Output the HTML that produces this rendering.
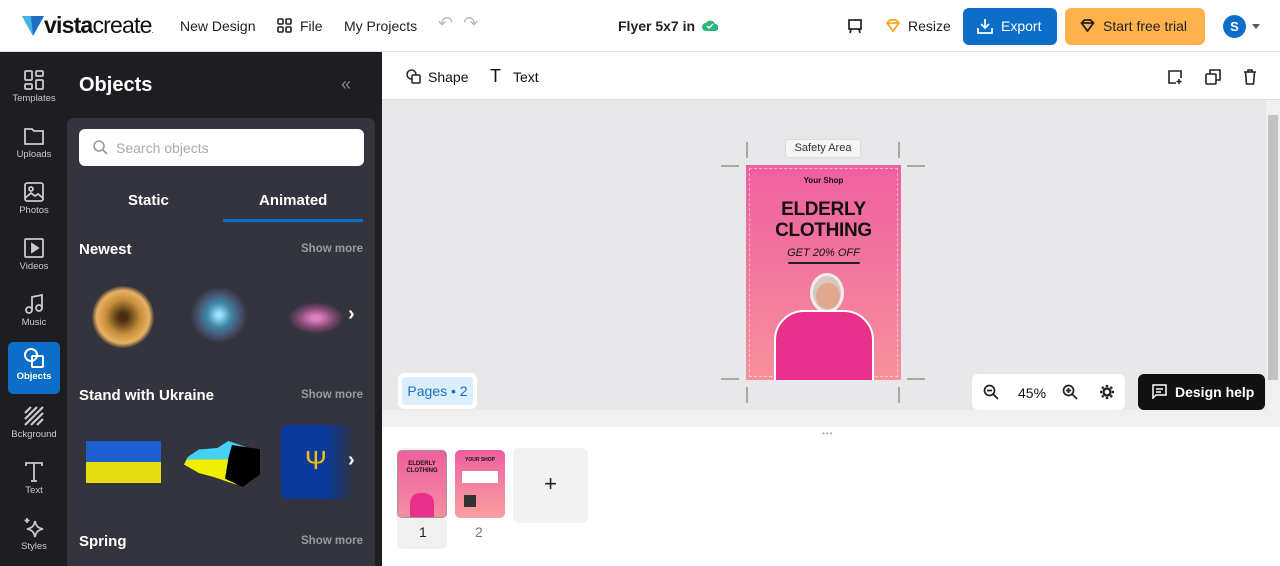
<!DOCTYPE html>
<html><head><meta charset="utf-8"><style>
*{margin:0;padding:0;box-sizing:border-box}
html,body{width:1280px;height:566px;overflow:hidden}
body{font-family:"Liberation Sans",sans-serif;background:#fff;position:relative;color:#111}
.a{position:absolute}
.hdr{left:0;top:0;width:1280px;height:52px;background:#fff;border-bottom:1px solid #e4e4e4}
.hdr span{position:absolute;font-size:14px;color:#222;top:18px}
.rail{left:0;top:52px;width:67px;height:514px;background:#1d1d22}
.ri{position:absolute;left:8px;width:52px;height:52px;text-align:center;color:#c9c9cf;font-size:9.5px}
.ri svg{display:block;margin:5px auto 2px}
.side{left:67px;top:52px;width:315px;height:514px;background:#1d1d22}
.pan{left:67px;top:118px;width:308px;height:448px;background:#33343d;border-radius:7px 7px 0 0}
.w{color:#fff;font-weight:bold;font-size:15px}
.sm{color:#9a9aa3;font-size:11.5px;font-weight:bold;width:100px;text-align:right;left:263px}
.cv{left:382px;top:100px;width:884px;height:310px;background:#e8e8ea}
</style></head><body>
<div class="a hdr">
 <svg class="a" style="left:22px;top:15px" width="22" height="22" viewBox="0 0 22 22"><path d="M0 1h22L11 21z" fill="#1b6fc2"/><path d="M0 1h9l2 20z" fill="#45b3e8"/></svg>
 <div class="a" style="left:44px;top:12px;font-size:23px;letter-spacing:-0.8px;color:#111"><b>vista</b>create<span style="font-size:8px;position:static">.</span></div>
 <span style="left:180px">New Design</span>
 <svg class="a" style="left:277px;top:18px" width="15" height="15" viewBox="0 0 15 15" fill="none" stroke="#222" stroke-width="1.6"><rect x="1" y="1" width="5" height="5" rx="1"/><rect x="9" y="1" width="5" height="5" rx="1"/><rect x="1" y="9" width="5" height="5" rx="1"/><rect x="9" y="9" width="5" height="5" rx="1"/></svg>
 <span style="left:300px">File</span>
 <span style="left:344px">My Projects</span>
 <span style="left:438px;color:#bbb;font-size:18px;top:13px">↶ &nbsp;↷</span>
 <span style="left:618px;font-weight:bold;font-size:14px">Flyer 5x7 in</span>
 <svg class="a" style="left:702px;top:19px" width="16" height="12" viewBox="0 0 16 12"><path d="M4 12a4 4 0 0 1 0-8 5 5 0 0 1 9 1 3.5 3.5 0 0 1 0 7z" fill="#2cb67d"/><path d="M5 7l2 2 4-4" stroke="#fff" stroke-width="1.5" fill="none"/></svg>
 <svg class="a" style="left:847px;top:18px" width="16" height="16" viewBox="0 0 16 16" fill="none" stroke="#222" stroke-width="1.7"><rect x="2" y="2" width="12" height="9"/><path d="M4 11l-1 4M12 11l1 4"/></svg>
 <svg class="a" style="left:886px;top:19px" width="14" height="13" viewBox="0 0 14 13" fill="none" stroke="#f5a623" stroke-width="1.8"><path d="M1 4l3-3h6l3 3-6 8z M1 4h12"/></svg>
 <span style="left:908px">Resize</span>
 <div class="a" style="left:963px;top:8px;width:94px;height:37px;background:#0d6ec9;border-radius:6px;color:#fff;font-size:14px;line-height:37px;padding-left:38px">Export</div>
 <svg class="a" style="left:977px;top:18px" width="16" height="16" viewBox="0 0 16 16" fill="none" stroke="#fff" stroke-width="1.7"><path d="M8 1v9M4 6l4 4 4-4M1 10v5h14v-5"/></svg>
 <div class="a" style="left:1065px;top:8px;width:140px;height:37px;background:#ffb24c;border-radius:6px;color:#222;font-size:14px;line-height:37px;padding-left:38px">Start free trial</div>
 <svg class="a" style="left:1080px;top:19px" width="15" height="13" viewBox="0 0 14 13" fill="none" stroke="#222" stroke-width="1.8"><path d="M1 4l3-3h6l3 3-6 8z M1 4h12"/></svg>
 <div class="a" style="left:1223px;top:15px;width:23px;height:23px;border-radius:50%;background:#0d6ec9;color:#fff;font-weight:bold;font-size:13px;text-align:center;line-height:23px">S</div>
 <div class="a" style="left:1252px;top:24px;border:4px solid transparent;border-top:5px solid #555"></div>
</div>
<div class="a side"></div>
<div class="a rail">
 <div class="ri" style="top:12px"><svg width="22" height="22" viewBox="0 0 22 22" fill="none" stroke="#c9c9cf" stroke-width="1.8"><rect x="2" y="2" width="7" height="9" rx="1"/><rect x="13" y="2" width="7" height="5" rx="1"/><rect x="2" y="15" width="7" height="5" rx="1"/><rect x="13" y="11" width="7" height="9" rx="1"/></svg>Templates</div>
 <div class="ri" style="top:68px"><svg width="22" height="22" viewBox="0 0 22 22" fill="none" stroke="#c9c9cf" stroke-width="1.8"><path d="M2 4h7l2 2h9v13H2z"/></svg>Uploads</div>
 <div class="ri" style="top:124px"><svg width="22" height="22" viewBox="0 0 22 22" fill="none" stroke="#c9c9cf" stroke-width="1.8"><rect x="2" y="2" width="18" height="18" rx="2"/><circle cx="8" cy="8" r="2"/><path d="M2 17l6-5 4 3 3-2 5 4"/></svg>Photos</div>
 <div class="ri" style="top:180px"><svg width="22" height="22" viewBox="0 0 22 22" fill="none" stroke="#c9c9cf" stroke-width="1.8"><rect x="2" y="2" width="18" height="18" rx="1"/><path d="M9 7v8l6-4z" fill="#c9c9cf"/></svg>Videos</div>
 <div class="ri" style="top:236px"><svg width="22" height="22" viewBox="0 0 22 22" fill="none" stroke="#c9c9cf" stroke-width="1.8"><circle cx="6" cy="17" r="3"/><circle cx="16" cy="15" r="3"/><path d="M9 17V4l10-2v13"/></svg>Music</div>
 <div class="ri" style="top:290px;background:#0d6ec9;border-radius:5px;color:#fff;font-weight:bold"><svg width="22" height="22" viewBox="0 0 22 22" fill="none" stroke="#fff" stroke-width="2"><circle cx="8" cy="8" r="6"/><rect x="9" y="9" width="11" height="11" rx="1"/></svg>Objects</div>
 <div class="ri" style="top:348px"><svg width="22" height="22" viewBox="0 0 22 22" stroke="#c9c9cf" stroke-width="2.2"><path d="M2 8l6-6M2 14L14 2M2 20L20 2M8 20L20 8M14 20l6-6"/></svg>Bckground</div>
 <div class="ri" style="top:404px"><svg width="22" height="22" viewBox="0 0 22 22" fill="none" stroke="#c9c9cf" stroke-width="1.8"><path d="M3 5V2h16v3M11 2v18M8 20h6"/></svg>Text</div>
 <div class="ri" style="top:460px"><svg width="22" height="22" viewBox="0 0 22 22" fill="none" stroke="#c9c9cf" stroke-width="1.8"><path d="M12 4c1 5 3 7 8 8-5 1-7 3-8 8-1-5-3-7-8-8 5-1 7-3 8-8z"/><path d="M4 1v5M1.5 3.5h5"/></svg>Styles</div>
</div>
<div class="a" style="left:79px;top:74px;color:#fff;font-weight:bold;font-size:20px">Objects</div>
<div class="a" style="left:341px;top:74px;color:#888;font-size:18px">«</div>
<div class="a pan"></div>
<div class="a" style="left:79px;top:129px;width:285px;height:37px;background:#fff;border-radius:6px"></div>
<svg class="a" style="left:93px;top:140px" width="15" height="15" viewBox="0 0 15 15" fill="none" stroke="#999" stroke-width="1.6"><circle cx="6" cy="6" r="5"/><path d="M10 10l4 4"/></svg>
<div class="a" style="left:116px;top:140px;color:#aaa;font-size:14px">Search objects</div>
<div class="a w" style="left:128px;top:192px">Static</div>
<div class="a w" style="left:259px;top:192px">Animated</div>
<div class="a" style="left:223px;top:219px;width:140px;height:3px;background:#0d6ec9"></div>
<div class="a w" style="left:79px;top:241px">Newest</div><div class="a sm" style="top:243px">Show more</div>
<div class="a" style="left:92px;top:286px;width:62px;height:62px;border-radius:50%;background:radial-gradient(circle,#4a3010 10%,#c8903c 40%,#e8b060 60%,transparent 72%)"></div>
<div class="a" style="left:190px;top:288px;width:58px;height:54px;border-radius:50%;background:radial-gradient(circle,#a0e0ff 5%,#3e8aa8 30%,rgba(100,120,180,.4) 55%,transparent 72%)"></div>
<div class="a" style="left:288px;top:302px;width:56px;height:32px;border-radius:50%;background:radial-gradient(ellipse,#e080c0 10%,rgba(200,90,160,.5) 45%,transparent 70%)"></div>
<div class="a" style="left:348px;top:303px;color:#fff;font-size:20px;font-weight:bold">›</div>
<div class="a w" style="left:79px;top:387px">Stand with Ukraine</div><div class="a sm" style="top:389px">Show more</div>
<div class="a" style="left:86px;top:441px;width:75px;height:42px;background:linear-gradient(#1f5fd0 50%,#e6dc10 50%)"></div>
<div class="a" style="left:184px;top:437px;width:74px;height:50px;background:linear-gradient(#45d0f5 45%,#f0ef00 45%);clip-path:polygon(5% 40%,20% 25%,45% 22%,60% 8%,80% 18%,100% 30%,95% 70%,70% 95%,40% 80%,20% 72%,0 55%)"></div>
<div class="a" style="left:225px;top:445px;width:35px;height:42px;background:#000;clip-path:polygon(20% 0,100% 10%,100% 70%,50% 100%,0 80%,10% 30%)"></div>
<div class="a" style="left:281px;top:425px;width:74px;height:74px;border-radius:7px;background:linear-gradient(90deg,#0a3a9e 60%,#33343d)"></div>
<div class="a" style="left:305px;top:445px;color:#f2c400;font-size:26px">Ψ</div>
<div class="a" style="left:348px;top:449px;color:#fff;font-size:20px;font-weight:bold">›</div>
<div class="a w" style="left:79px;top:533px">Spring</div><div class="a sm" style="top:535px">Show more</div>
<div class="a" style="left:382px;top:52px;width:898px;height:48px;background:#fff;border-bottom:1px solid #ddd"></div>
<svg class="a" style="left:406px;top:69px" width="15" height="15" viewBox="0 0 15 15" fill="none" stroke="#222" stroke-width="1.5"><circle cx="5.5" cy="5.5" r="4.5"/><rect x="6" y="6" width="8" height="8" rx="1" fill="#fff"/></svg>
<div class="a" style="left:428px;top:69px;font-size:14px">Shape</div>
<div class="a" style="left:490px;top:66px;font-size:18px">T</div>
<div class="a" style="left:513px;top:69px;font-size:14px">Text</div>
<svg class="a" style="left:1167px;top:69px" width="16" height="16" viewBox="0 0 16 16" fill="none" stroke="#222" stroke-width="1.6"><path d="M9 14H2V2h12v7M12 10v5M9.5 12.5h5"/></svg>
<svg class="a" style="left:1205px;top:69px" width="16" height="16" viewBox="0 0 16 16" fill="none" stroke="#222" stroke-width="1.6"><rect x="1" y="5" width="10" height="10" rx="1"/><path d="M5 5V1h10v10h-4"/></svg>
<svg class="a" style="left:1243px;top:69px" width="14" height="16" viewBox="0 0 14 16" fill="none" stroke="#222" stroke-width="1.6"><path d="M1 3h12M5 3V1h4v2M2.5 3l1 12h7l1-12"/></svg>
<div class="a cv"></div>
<div class="a" style="left:1266px;top:100px;width:14px;height:310px;background:#f0f0f0"></div>
<div class="a" style="left:1268px;top:115px;width:10px;height:265px;background:#c2c2c2"></div>
<div class="a" style="left:382px;top:410px;width:898px;height:17px;background:#f0f0f0"></div>
<div class="a" style="left:721px;top:165px;width:18px;height:2px;background:#aaa"></div>
<div class="a" style="left:907px;top:165px;width:18px;height:2px;background:#aaa"></div>
<div class="a" style="left:721px;top:378px;width:18px;height:2px;background:#aaa"></div>
<div class="a" style="left:907px;top:378px;width:18px;height:2px;background:#aaa"></div>
<div class="a" style="left:746px;top:142px;width:2px;height:16px;background:#aaa"></div>
<div class="a" style="left:898px;top:142px;width:2px;height:16px;background:#aaa"></div>
<div class="a" style="left:746px;top:387px;width:2px;height:16px;background:#aaa"></div>
<div class="a" style="left:898px;top:387px;width:2px;height:16px;background:#aaa"></div>
<div class="a" style="left:746px;top:165px;width:155px;height:215px;background:linear-gradient(#ef5fa0,#f7909a);overflow:hidden">
 <div class="a" style="left:3px;top:3px;right:3px;bottom:3px;border:1px dashed #fff8"></div>
 <div class="a" style="left:0;width:155px;top:11px;text-align:center;font-size:8px;font-weight:bold">Your Shop</div>
 <div class="a" style="left:0;width:155px;top:34px;text-align:center;font-size:19px;font-weight:900;line-height:21px;letter-spacing:-.3px">ELDERLY<br>CLOTHING</div>
 <div class="a" style="left:0;width:155px;top:82px;text-align:center;font-size:11px;font-style:italic">GET 20% OFF</div>
 <div class="a" style="left:42px;top:97px;width:72px;height:2px;background:#222;border-radius:2px"></div>
 <div class="a" style="left:64px;top:108px;width:34px;height:40px;border-radius:50%;background:#d8c8c0;border:3px solid #eee"></div>
 <div class="a" style="left:70px;top:118px;width:24px;height:26px;border-radius:50%;background:#e0a890"></div>
 <div class="a" style="left:28px;top:145px;width:100px;height:80px;border-radius:30px 30px 0 0;background:#e8308c;border:2px solid #fff"></div>
</div>
<div class="a" style="left:785px;top:139px;width:76px;height:19px;background:#f6f6f6;border:1px solid #ddd;border-radius:3px;font-size:11px;color:#333;text-align:center;line-height:17px">Safety Area</div>
<div class="a" style="left:398px;top:373px;width:79px;height:36px;background:#fff;border-radius:6px"></div>
<div class="a" style="left:402px;top:377px;width:71px;height:28px;background:#dbeefc;border-radius:3px;color:#1a6fc8;font-size:14px;text-align:center;line-height:28px">Pages • 2</div>
<div class="a" style="left:972px;top:374px;width:153px;height:36px;background:#fff;border-radius:6px"></div>
<svg class="a" style="left:983px;top:384px" width="16" height="16" viewBox="0 0 16 16" fill="none" stroke="#222" stroke-width="1.7"><circle cx="6.5" cy="6.5" r="5"/><path d="M10 10l5 5M4 6.5h5"/></svg>
<div class="a" style="left:1018px;top:385px;font-size:14px">45%</div>
<svg class="a" style="left:1062px;top:384px" width="16" height="16" viewBox="0 0 16 16" fill="none" stroke="#222" stroke-width="1.7"><circle cx="6.5" cy="6.5" r="5"/><path d="M10 10l5 5M4 6.5h5M6.5 4v5"/></svg>
<svg class="a" style="left:1100px;top:385px" width="14" height="14" viewBox="0 0 14 14" fill="none" stroke="#222" stroke-width="2.4"><circle cx="7" cy="7" r="3.5"/><path d="M7 0v2M7 12v2M0 7h2M12 7h2M2 2l1.5 1.5M10.5 10.5L12 12M2 12l1.5-1.5M10.5 3.5L12 2"/></svg>
<div class="a" style="left:1138px;top:374px;width:127px;height:36px;background:#111;border-radius:6px;color:#fff;font-weight:bold;font-size:14px;line-height:36px;padding-left:37px">Design help</div>
<svg class="a" style="left:1152px;top:384px" width="15" height="15" viewBox="0 0 15 15" fill="none" stroke="#fff" stroke-width="1.5"><path d="M1 1h13v10H4l-3 3z M4 5h7M4 8h5"/></svg>
<div class="a" style="left:822px;top:429px;font-size:8px;color:#aaa;letter-spacing:1px">•••</div>
<div class="a" style="left:397px;top:448px;width:50px;height:101px;background:#f0f0f0;border-radius:5px"></div>
<div class="a" style="left:397px;top:450px;width:50px;height:68px;background:linear-gradient(#ee5fa0,#f58ea0);border:1px solid #999;border-radius:5px;font-size:6px;font-weight:900;text-align:center;padding-top:10px;line-height:7px;overflow:hidden">ELDERLY<br>CLOTHING<div style="margin:18px auto 0;width:24px;height:30px;background:#e8308c;border-radius:10px 10px 0 0"></div></div>
<div class="a" style="left:455px;top:450px;width:50px;height:68px;background:linear-gradient(#ee5fa0,#f8a0a0);border-radius:5px;font-size:5px;font-weight:900;text-align:center;padding-top:7px">YOUR SHOP<div style="margin:8px auto 0;width:36px;height:12px;background:#fff"></div><div style="margin:12px 0 0 9px;width:12px;height:12px;background:#333"></div></div>
<div class="a" style="left:513px;top:448px;width:75px;height:75px;background:#f2f2f2;border-radius:6px;font-size:22px;text-align:center;line-height:72px;color:#222">+</div>
<div class="a" style="left:419px;top:524px;font-size:14px;color:#222">1</div>
<div class="a" style="left:475px;top:524px;font-size:14px;color:#777">2</div>
</body></html>
